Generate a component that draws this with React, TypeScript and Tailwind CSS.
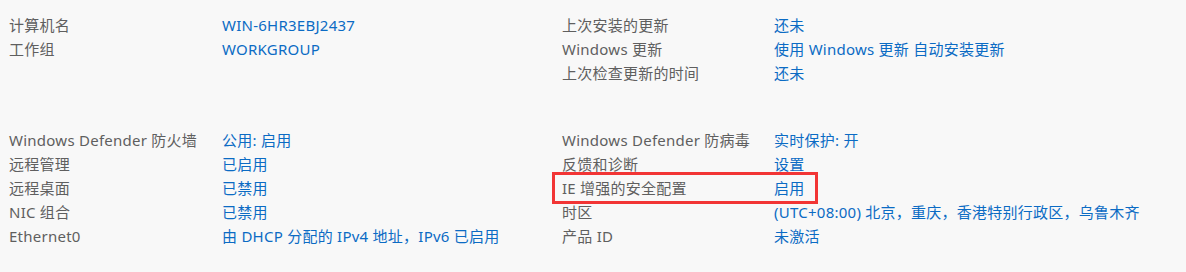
import React from "react";

type Row = [string, string];

const top: [Row, Row | null][] = [
  [["计算机名", "WIN-6HR3EBJ2437"], ["上次安装的更新", "还未"]],
  [["工作组", "WORKGROUP"], ["Windows 更新", "使用 Windows 更新 自动安装更新"]],
  [["", ""], ["上次检查更新的时间", "还未"]],
];

const bottom: [Row, Row][] = [
  [["Windows Defender 防火墙", "公用: 启用"], ["Windows Defender 防病毒", "实时保护: 开"]],
  [["远程管理", "已启用"], ["反馈和诊断", "设置"]],
  [["远程桌面", "已禁用"], ["IE 增强的安全配置", "启用"]],
  [["NIC 组合", "已禁用"], ["时区", "(UTC+08:00) 北京，重庆，香港特别行政区，乌鲁木齐"]],
  [["Ethernet0", "由 DHCP 分配的 IPv4 地址，IPv6 已启用"], ["产品 ID", "未激活"]],
];

function Cells({ left, right, highlight }: { left: Row; right: Row | null; highlight?: boolean }) {
  return (
    <>
      <div className="text-[#5f5f5f] whitespace-nowrap">{left[0]}</div>
      <div className="text-[#0b6bc4] whitespace-nowrap">{left[1]}</div>
      <div className="col-span-2 relative grid grid-cols-[212px_1fr]">
        <div className="text-[#5f5f5f] whitespace-nowrap">{right ? right[0] : ""}</div>
        <div className="text-[#0b6bc4] whitespace-nowrap">{right ? right[1] : ""}</div>
        {highlight && (
          <div className="absolute left-[-10px] top-[-4px] w-[266px] h-[32px] border-[3px] border-[#f23535] pointer-events-none" />
        )}
      </div>
    </>
  );
}

export default function App() {
  return (
    <div
      className="w-[1186px] h-[272px] bg-[#f8f8f8] pl-[9px] pt-[13px] text-[15px] leading-[24px] tracking-[0.25px] overflow-hidden"
      style={{ fontFamily: '"Segoe UI", "Noto Sans", "Noto Sans CJK SC", sans-serif' }}
    >
      <div className="grid grid-cols-[213px_340px_212px_1fr]">
        {top.map(([l, r], i) => (
          <Cells key={i} left={l} right={r} />
        ))}
      </div>
      <div className="grid grid-cols-[213px_340px_212px_1fr] mt-[43px]">
        {bottom.map(([l, r], i) => (
          <Cells key={i} left={l} right={r} highlight={i === 2} />
        ))}
      </div>
    </div>
  );
}
